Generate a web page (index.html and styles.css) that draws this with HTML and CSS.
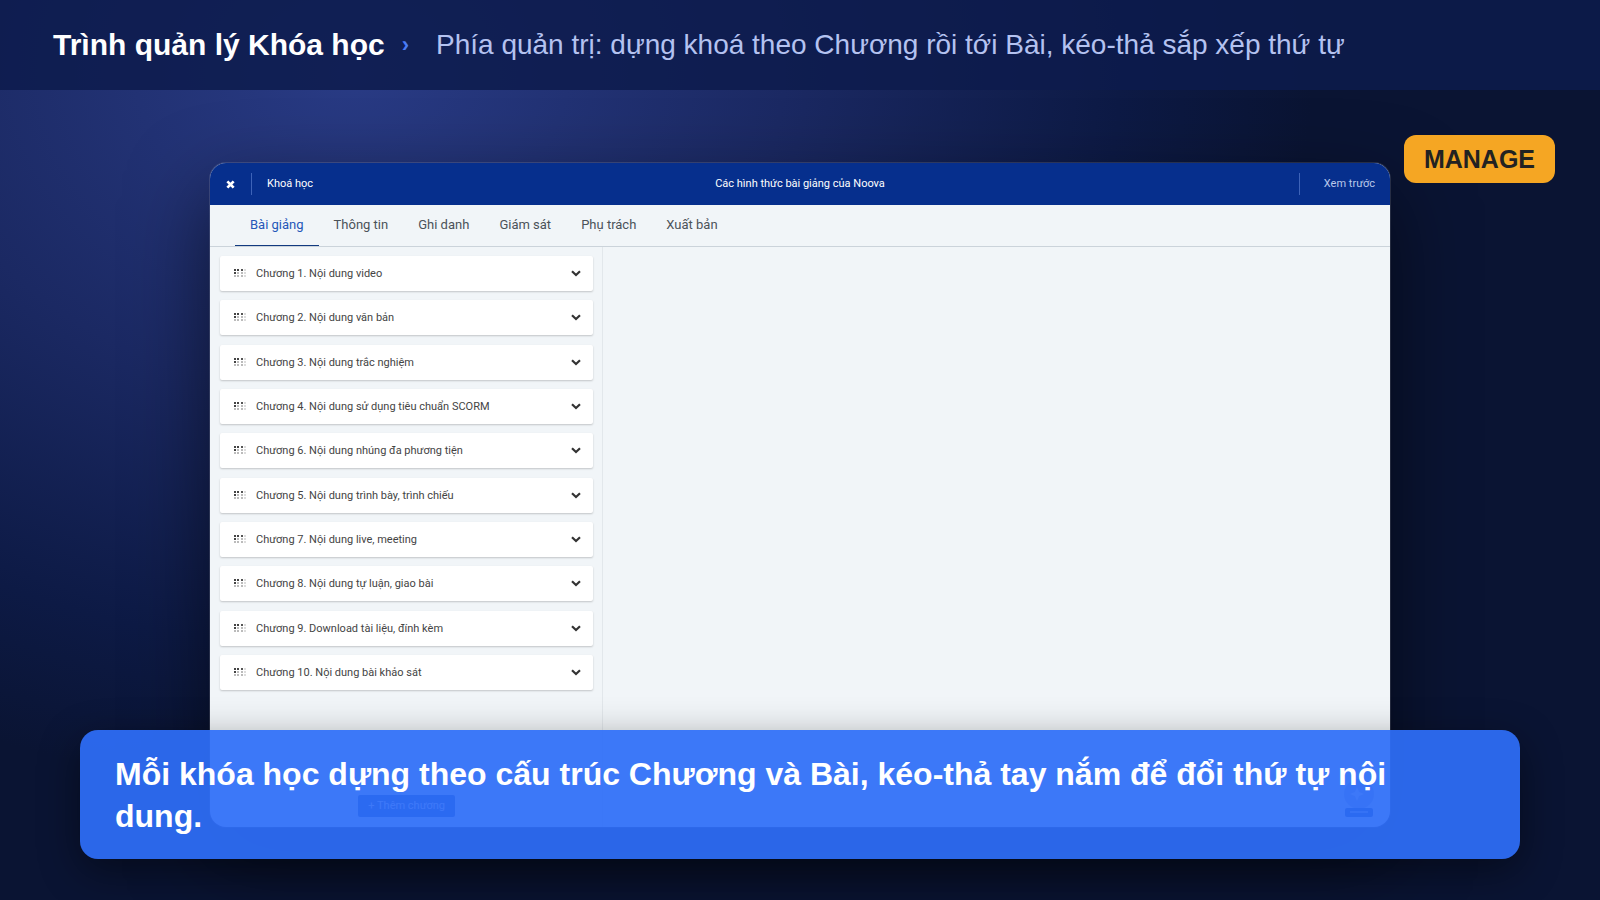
FILE: index.html
```html
<!DOCTYPE html>
<html lang="vi">
<head>
    <meta charset="UTF-8">
    <title>Trình quản lý Khóa học</title>
    <link rel="stylesheet" href="styles.css">
</head>
<body>
    <header class="header">
        <h1>Trình quản lý Khóa học</h1>
        <span class="arrow">›</span>
        <p>Phía quản trị: dựng khoá theo Chương rồi tới Bài, kéo-thả sắp xếp thứ tự</p>
    </header>

    <main class="stage">
        <div class="window">
            <div class="topbar">
                <div class="topbar-left">
                    <button class="close" aria-label="Đóng">
                        <svg width="9" height="9" viewBox="0 0 8 8"><path d="M1.2 1.2L6.8 6.8M6.8 1.2L1.2 6.8" stroke="#fff" stroke-width="2.4"/></svg>
                    </button>
                    <a href="#">Khoá học</a>
                </div>
                <span>Các hình thức bài giảng của Noova</span>
                <div class="topbar-right">
                    <a href="#">Xem trước</a>
                </div>
            </div>
            <nav class="tabs">
                <a href="#" class="active">Bài giảng</a>
                <a href="#">Thông tin</a>
                <a href="#">Ghi danh</a>
                <a href="#">Giám sát</a>
                <a href="#">Phụ trách</a>
                <a href="#">Xuất bản</a>
            </nav>
            <div class="content">
                <div class="sidebar">
                    <ul class="chapters" id="chapters"></ul>
                    <button class="add">+ Thêm chương</button>
                </div>
                <div class="preview">
                    <button class="chat" aria-label="Hỗ trợ">
                        <svg width="34" height="38" viewBox="0 0 34 38">
                            <circle cx="17" cy="15" r="15" fill="#a9bbdc"/>
                            <path d="M15 8l2 5 5 2-5 2-2 5-2-5-5-2 5-2z" fill="#fff"/>
                            <rect x="3" y="29" width="28" height="9" rx="2" fill="#0a3a9c"/>
                            <path d="M8 33h18" stroke="#8ea6d6" stroke-width="2"/>
                        </svg>
                    </button>
                </div>
            </div>
        </div>
        <span class="badge">MANAGE</span>
        <p class="caption">Mỗi khóa học dựng theo cấu trúc Chương và Bài, kéo-thả tay nắm để đổi thứ tự nội dung.</p>
    </main>

    <script>
        const chapters=[
            "Chương 1. Nội dung video",
            "Chương 2. Nội dung văn bản",
            "Chương 3. Nội dung trắc nghiệm",
            "Chương 4. Nội dung sử dụng tiêu chuẩn SCORM",
            "Chương 6. Nội dung nhúng đa phương tiện",
            "Chương 5. Nội dung trình bày, trình chiếu",
            "Chương 7. Nội dung live, meeting",
            "Chương 8. Nội dung tự luận, giao bài",
            "Chương 9. Download tài liệu, đính kèm",
            "Chương 10. Nội dung bài khảo sát"
        ];
        const list=document.getElementById("chapters");
        chapters.forEach((name)=>
        {
            const item=document.createElement("li");
            item.innerHTML=`
                <svg class="grip" width="12" height="9" viewBox="0 0 12 9">
                    <path d="M0 1h2M3 1h2M0 4h2" stroke="#444" stroke-width="2"/>
                    <path d="M7 1h2" stroke="#555" stroke-width="2"/>
                    <path d="M3 4h2M0 7h2M3 7h2M7 4h2M7 7h2" stroke="#bbb" stroke-width="2"/>
                    <path d="M10 1h2M10 4h2M10 7h2" stroke="#ddd" stroke-width="2"/>
                </svg>
                <span>${name}</span>
                <button aria-label="Mở ${name}">
                    <svg width="10" height="7" viewBox="0 0 10 7"><path d="M1 1.2L5 5L9 1.2" fill="none" stroke="#333" stroke-width="2.2"/></svg>
                </button>`;
            list.appendChild(item);
        });
    </script>
</body>
</html>
```
FILE: styles.css
```css
*{
    box-sizing: border-box;
}
body{
    margin: 0;
    min-height: 100vh;
    display: flex;
    flex-direction: column;
    font-family: "Liberation Sans", Arial, sans-serif;
    background: radial-gradient(60% 80% at 22% 8%, #293b85 0%, #1b2963 45%, #0d1a45 80%, #0a1433 100%);
    background-color: #0a1433;
}
h1, p, ul{
    margin: 0;
    padding: 0;
}
a{
    color: inherit;
    text-decoration: none;
}
button{
    border: none;
    background: none;
    padding: 0;
    font-family: inherit;
    cursor: pointer;
}
svg{
    display: block;
}
.header{
    height: 90px;
    padding: 0 53px;
    display: flex;
    align-items: center;
    background-color: rgba(13, 27, 76, 0.85);
}
.header h1{
    font-size: 30px;
    color: white;
}
.header .arrow{
    margin: 0 27px 0 17px;
    font-size: 22px;
    font-weight: bold;
    color: #4a7cf7;
}
.header p{
    font-size: 28px;
    color: #b4c2f0;
}
.stage{
    position: relative;
    flex: 1;
    display: flex;
    justify-content: center;
    align-items: center;
}
.window{
    width: 100%;
    max-width: 1180px;
    aspect-ratio: 16 / 9;
    display: flex;
    flex-direction: column;
    overflow: hidden;
    border-radius: 16px;
    background-color: #f1f5f8;
    box-shadow: 0 0 0 1px rgba(255, 255, 255, 0.12), 0 30px 80px rgba(0, 0, 0, 0.55);
    font-family: Roboto, sans-serif;
}
.topbar{
    height: 42px;
    padding: 0 15px;
    display: grid;
    grid-template-columns: 1fr auto 1fr;
    align-items: center;
    background-color: #062f8d;
    color: white;
    font-size: 11px;
    line-height: 22px;
}
.topbar-left, .topbar-right{
    display: flex;
    align-items: center;
}
.topbar-right{
    justify-content: flex-end;
    color: #b9c8ea;
}
.close{
    padding: 0 16px 0 1px;
}
.topbar-left a, .topbar-right a{
    border-left: 1px solid #3d63b8;
}
.topbar-left a{
    padding-left: 15px;
}
.topbar-right a{
    padding-left: 24px;
}
.tabs{
    height: 42px;
    padding: 0 25px;
    display: flex;
    border-bottom: 1px solid #cbd3da;
    font-size: 13px;
    line-height: 40px;
    color: #4b5258;
}
.tabs a{
    padding: 0 15px;
}
.tabs .active{
    color: #2457b8;
    border-bottom: 1px solid #123a80;
}
.content{
    flex: 1;
    display: grid;
    grid-template-columns: 1fr 2fr;
}
.sidebar{
    padding: 9px 9px 10px 10px;
    display: flex;
    flex-direction: column;
    justify-content: space-between;
    align-items: center;
    border-right: 1px solid #e2e7eb;
}
.chapters{
    width: 100%;
    height: 434px;
    display: flex;
    flex-direction: column;
    justify-content: space-between;
    list-style: none;
}
.chapters li{
    height: 35px;
    padding: 0 12px 0 14px;
    display: flex;
    align-items: center;
    background-color: white;
    border-radius: 2px;
    box-shadow: 0 1px 2px rgba(0, 0, 0, 0.2);
    font-size: 11px;
    color: #444;
}
.chapters span{
    flex: 1;
    padding-left: 10px;
}
.add{
    height: 22px;
    padding: 0 10px;
    border-radius: 2px;
    background-color: #0a3a9c;
    color: white;
    font-size: 11px;
}
.preview{
    display: flex;
    justify-content: flex-end;
    align-items: flex-end;
    padding: 0 14px 10px;
}
.badge{
    position: absolute;
    top: 45px;
    right: 45px;
    padding: 0 20px;
    border-radius: 12px;
    background-color: #f5a623;
    color: #222;
    font-size: 25px;
    font-weight: bold;
    line-height: 48px;
}
.caption{
    position: absolute;
    left: 80px;
    right: 80px;
    bottom: 41px;
    padding: 23px 80px 22px 35px;
    border-radius: 18px;
    background-color: rgba(46, 110, 247, 0.93);
    box-shadow: 0 12px 40px rgba(0, 0, 0, 0.45);
    color: white;
    font-size: 32px;
    font-weight: bold;
    line-height: 42px;
}
```
